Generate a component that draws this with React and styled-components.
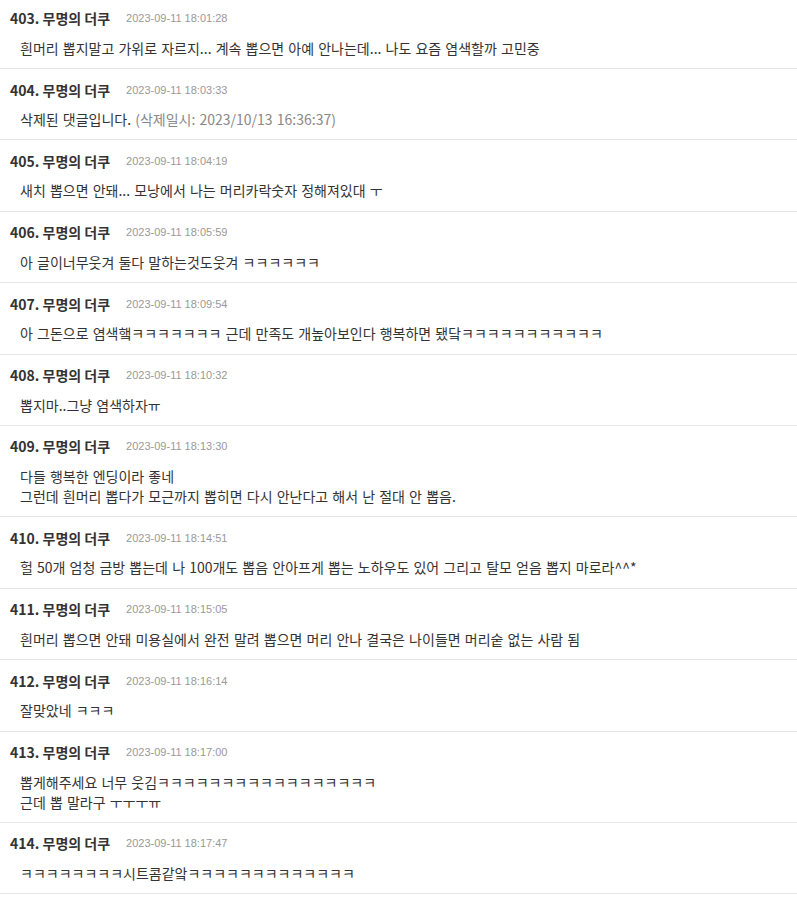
import React from "react";
import styled, { createGlobalStyle } from "styled-components";

const GlobalStyle = createGlobalStyle`
  body {
    margin: 0;
    background: #fff;
    font-family: "Noto Sans CJK KR", "Liberation Sans", sans-serif;
    color: #333;
  }
`;

const List = styled.ul`
  list-style: none;
  margin: -2.4px 0 0;
  padding: 0;
`;

const Item = styled.li`
  padding: 12px 10px 10.4px;
  border-bottom: 1px solid #e6e6e6;
`;

const Head = styled.div`
  display: flex;
  align-items: center;
  height: 17px;
`;

const Name = styled.strong`
  font-size: 14px;
  font-weight: 700;
  color: #333;
`;

const Date = styled.span`
  margin-left: 16px;
  font-family: "Liberation Sans", "Noto Sans CJK KR", sans-serif;
  font-size: 11px;
  color: #999;
`;

const Body = styled.div`
  margin-top: 11px;
  padding-left: 10px;
  font-size: 14px;
  line-height: 20px;
  word-spacing: 1px;
  color: #333;
`;

const Muted = styled.span`
  color: #888;
`;

const comments = [
  { no: 403, date: "2023-09-11 18:01:28", lines: ["흰머리 뽑지말고 가위로 자르지... 계속 뽑으면 아예 안나는데... 나도 요즘 염색할까 고민중"] },
  { no: 404, date: "2023-09-11 18:03:33", deleted: "(삭제일시: 2023/10/13 16:36:37)" },
  { no: 405, date: "2023-09-11 18:04:19", lines: ["새치 뽑으면 안돼... 모낭에서 나는 머리카락숫자 정해져있대 ㅜ"] },
  { no: 406, date: "2023-09-11 18:05:59", lines: ["아 글이너무웃겨 둘다 말하는것도웃겨 ㅋㅋㅋㅋㅋㅋ"] },
  { no: 407, date: "2023-09-11 18:09:54", lines: ["아 그돈으로 염색햌ㅋㅋㅋㅋㅋㅋㅋ 근데 만족도 개높아보인다 행복하면 됐닼ㅋㅋㅋㅋㅋㅋㅋㅋㅋㅋㅋ"] },
  { no: 408, date: "2023-09-11 18:10:32", lines: ["뽑지마..그냥 염색하자ㅠ"] },
  { no: 409, date: "2023-09-11 18:13:30", lines: ["다들 행복한 엔딩이라 좋네", "그런데 흰머리 뽑다가 모근까지 뽑히면 다시 안난다고 해서 난 절대 안 뽑음."] },
  { no: 410, date: "2023-09-11 18:14:51", lines: ["헐 50개 엄청 금방 뽑는데 나 100개도 뽑음 안아프게 뽑는 노하우도 있어 그리고 탈모 얻음 뽑지 마로라^^*"] },
  { no: 411, date: "2023-09-11 18:15:05", lines: ["흰머리 뽑으면 안돼 미용실에서 완전 말려 뽑으면 머리 안나 결국은 나이들면 머리숱 없는 사람 됨"] },
  { no: 412, date: "2023-09-11 18:16:14", lines: ["잘맞았네 ㅋㅋㅋ"] },
  { no: 413, date: "2023-09-11 18:17:00", lines: ["뽑게해주세요 너무 웃김ㅋㅋㅋㅋㅋㅋㅋㅋㅋㅋㅋㅋㅋㅋㅋㅋㅋ", "근데 뽑 말라구 ㅜㅜㅜㅠ"] },
  { no: 414, date: "2023-09-11 18:17:47", lines: ["ㅋㅋㅋㅋㅋㅋㅋㅋ시트콤같앜ㅋㅋㅋㅋㅋㅋㅋㅋㅋㅋㅋㅋㅋ"] },
];

const App = () => {
  return (
    <>
      <GlobalStyle />
      <List>
        {comments.map((c) => (
          <Item key={c.no}>
            <Head>
              <Name>{c.no}. 무명의 더쿠</Name>
              <Date>{c.date}</Date>
            </Head>
            <Body>
              {c.deleted ? (
                <>
                  삭제된 댓글입니다. <Muted>{c.deleted}</Muted>
                </>
              ) : (
                c.lines.map((line, i) => <div key={i}>{line}</div>)
              )}
            </Body>
          </Item>
        ))}
      </List>
    </>
  );
};

export default App;
